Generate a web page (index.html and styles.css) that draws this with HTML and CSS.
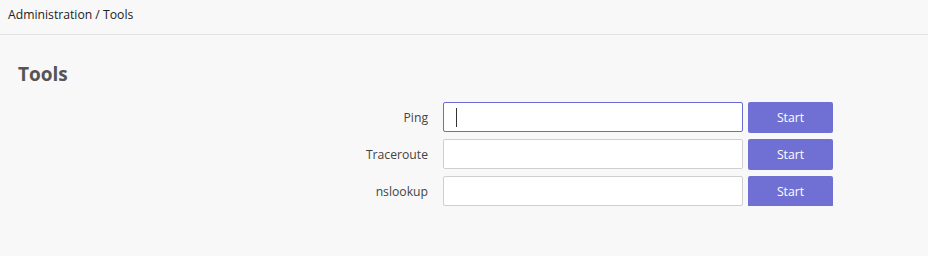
FILE: index.html
```html
<!DOCTYPE html>
<html>
<head>
<meta charset="utf-8">
<link rel="stylesheet" href="styles.css">
</head>
<body>
<header class="topbar">Administration / Tools</header>
<main class="content">
  <h1 class="title">Tools</h1>
  <div class="tools">
    <div class="row">
      <label class="label">Ping</label>
      <div class="input focused"><span class="caret"></span></div>
      <button class="btn">Start</button>
    </div>
    <div class="row">
      <label class="label">Traceroute</label>
      <div class="input"></div>
      <button class="btn">Start</button>
    </div>
    <div class="row">
      <label class="label">nslookup</label>
      <div class="input"></div>
      <button class="btn">Start</button>
    </div>
  </div>
</main>
</body>
</html>
```
FILE: styles.css
```css
html, body {
  margin: 0;
  padding: 0;
  background: #f8f8f8;
  font-family: "Open Sans", "Noto Sans", sans-serif;
  color: #333;
}
.topbar {
  height: 35px;
  box-sizing: border-box;
  padding: 6px 0 0 8px;
  font-size: 12.2px;
  color: #222;
  border-bottom: 1px solid #e2e2e2;
}
.content {
  padding: 26px 18px 0 18px;
}
.title {
  margin: 0;
  font-size: 19px;
  font-weight: 700;
  color: #555;
  line-height: 26px;
}
.tools {
  margin-top: 15px;
  display: flex;
  flex-direction: column;
  gap: 7px;
}
.row {
  display: flex;
  align-items: center;
  height: 30px;
}
.label {
  width: 410px;
  text-align: right;
  font-size: 12.2px;
  color: #444;
  padding-right: 15px;
}
.input {
  width: 300px;
  height: 30px;
  box-sizing: border-box;
  background: #fff;
  border: 1px solid #cfcfcf;
  border-radius: 2px;
  display: flex;
  align-items: center;
  padding-left: 12px;
}
.input.focused {
  border-color: #6b6bd6;
}
.caret {
  width: 1px;
  height: 19px;
  background: #333;
}
.btn {
  margin-left: 5px;
  width: 85px;
  height: 31px;
  border: none;
  border-radius: 2px;
  background: #7070d4;
  color: #fff;
  font-family: inherit;
  font-size: 12.2px;
  padding: 0;
}
```
